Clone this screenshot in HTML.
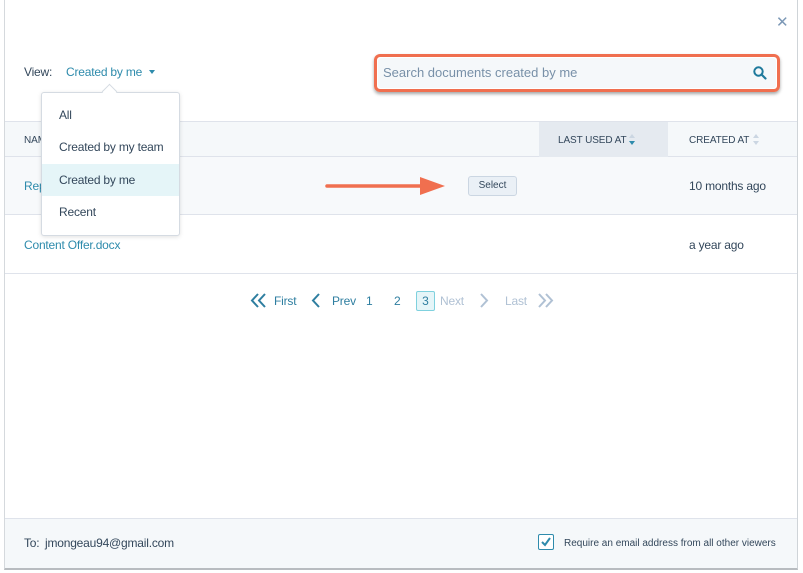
<!DOCTYPE html>
<html><head><style>
*{box-sizing:border-box;margin:0;padding:0}
body{width:803px;height:573px;background:#fff;font-family:"Liberation Sans",sans-serif;position:relative;overflow:hidden;color:#33475b}
.modal{position:absolute;left:4px;top:0;width:794px;height:570px;border-left:1px solid #d5d9dd;border-right:1px solid #cfd4d8;border-bottom:2px solid #b8bcc0;background:#fff}
.abs{position:absolute}
.t{font-size:12px;letter-spacing:-0.2px}
.h{font-size:10px;letter-spacing:-0.1px;color:#33475b}
</style></head><body>
<div class="modal"></div>
<div class="abs" style="left:776px;top:13px;font-size:15px;color:#7c98b6">✕</div>
<div class="abs t" style="left:24px;top:65px;color:#33475b">View:</div>
<div class="abs t" style="left:66px;top:65px;color:#2e8bac">Created by me</div>
<div class="abs" style="left:149px;top:70px;width:0;height:0;border-left:3px solid transparent;border-right:3px solid transparent;border-top:4px solid #2e8bac"></div>
<!-- search -->
<div class="abs" style="left:374px;top:54px;width:406px;height:38px;border:3px solid #f06f4f;border-radius:6px;box-shadow:0 2px 3px rgba(0,0,0,.35)"></div>
<div class="abs" style="left:378px;top:58px;width:398px;height:30px;background:#f5f8fa;border-radius:3px"></div>
<div class="abs" style="left:383px;top:65px;font-size:13px;color:#7890a8">Search documents created by me</div>
<svg class="abs" style="left:753px;top:66px" width="14" height="14" viewBox="0 0 14 14"><circle cx="5.5" cy="5.5" r="4.2" fill="none" stroke="#1f7a9c" stroke-width="2"/><path d="M8.5 8.5L12.5 12.5" stroke="#1f7a9c" stroke-width="2.2" stroke-linecap="round"/></svg>
<!-- table -->
<div class="abs" style="left:5px;top:121px;width:792px;height:36px;background:#f5f8fa;border-top:1px solid #dfe3eb;border-bottom:1px solid #dfe3eb"></div>
<div class="abs" style="left:539px;top:122px;width:129px;height:35px;background:#e5eaf0"></div>
<div class="abs h" style="left:24px;top:135px">NAME</div>
<div class="abs h" style="left:558px;top:135px">LAST USED AT</div>
<div class="abs" style="left:629px;top:134px;width:0;height:0;border-left:3px solid transparent;border-right:3px solid transparent;border-bottom:4px solid #cbd6e2"></div>
<div class="abs" style="left:629px;top:141px;width:0;height:0;border-left:3px solid transparent;border-right:3px solid transparent;border-top:4px solid #2e8bac"></div>
<div class="abs h" style="left:689px;top:135px">CREATED AT</div>
<div class="abs" style="left:753px;top:134px;width:0;height:0;border-left:3px solid transparent;border-right:3px solid transparent;border-bottom:4px solid #cbd6e2"></div>
<div class="abs" style="left:753px;top:141px;width:0;height:0;border-left:3px solid transparent;border-right:3px solid transparent;border-top:4px solid #cbd6e2"></div>
<div class="abs" style="left:5px;top:157px;width:792px;height:58px;background:#f7f9fb;border-bottom:1px solid #dfe3eb"></div>
<div class="abs t" style="left:24px;top:179px;color:#2e8bac">Report</div>
<div class="abs" style="left:468px;top:176px;width:49px;height:20px;background:#eaf0f6;border:1px solid #cbd6e2;border-radius:3px;font-size:10px;color:#33475b;text-align:center;line-height:18px">Select</div>
<div class="abs t" style="left:689px;top:179px">10 months ago</div>
<div class="abs" style="left:5px;top:215px;width:792px;height:59px;border-bottom:1px solid #dfe3eb"></div>
<div class="abs t" style="left:24px;top:238px;color:#2e8bac">Content Offer.docx</div>
<div class="abs t" style="left:689px;top:238px">a year ago</div>
<!-- arrow -->
<svg class="abs" style="left:322px;top:174px" width="126" height="24"><path d="M5 12H100" stroke="#f06f4f" stroke-width="3.5" stroke-linecap="round"/><path d="M98 3L123 12L98 21Z" fill="#f06f4f"/></svg>
<!-- dropdown -->
<div class="abs" style="left:41px;top:92px;width:139px;height:144px;background:#fff;border:1px solid #d5dbe2;border-radius:3px;box-shadow:0 1px 4px rgba(0,0,0,.12)"></div>
<div class="abs" style="left:104px;top:86px;width:11px;height:11px;background:#fff;border-left:1px solid #d5dbe2;border-top:1px solid #d5dbe2;transform:rotate(45deg)"></div>
<div class="abs" style="left:42px;top:164px;width:137px;height:32px;background:#e5f5f8"></div>
<div class="abs t" style="left:59px;top:108px">All</div>
<div class="abs t" style="left:59px;top:140px">Created by my team</div>
<div class="abs t" style="left:59px;top:173px">Created by me</div>
<div class="abs t" style="left:59px;top:205px">Recent</div>
<!-- pagination -->
<svg class="abs" style="left:249px;top:292px" width="20" height="17"><path d="M9 2L3 8.5L9 15M16 2L10 8.5L16 15" stroke="#2e7ea0" stroke-width="2" fill="none"/></svg>
<div class="abs t" style="left:274px;top:294px;color:#2e7ea0">First</div>
<svg class="abs" style="left:310px;top:292px" width="12" height="17"><path d="M9 2L3 8.5L9 15" stroke="#2e7ea0" stroke-width="2" fill="none"/></svg>
<div class="abs t" style="left:332px;top:294px;color:#2e7ea0">Prev</div>
<div class="abs t" style="left:366px;top:294px;color:#2e7ea0">1</div>
<div class="abs t" style="left:394px;top:294px;color:#2e7ea0">2</div>
<div class="abs" style="left:416px;top:291px;width:19px;height:20px;border:1px solid #7fd1de;background:#e5f5f8;border-radius:2px;font-size:12px;color:#2e7ea0;text-align:center;line-height:18px">3</div>
<div class="abs t" style="left:440px;top:294px;color:#b0c1d4">Next</div>
<svg class="abs" style="left:478px;top:292px" width="12" height="17"><path d="M3 2L9 8.5L3 15" stroke="#b0c1d4" stroke-width="2" fill="none"/></svg>
<div class="abs t" style="left:505px;top:294px;color:#b0c1d4">Last</div>
<svg class="abs" style="left:536px;top:292px" width="20" height="17"><path d="M3 2L9 8.5L3 15M10 2L16 8.5L10 15" stroke="#b0c1d4" stroke-width="2" fill="none"/></svg>
<!-- footer -->
<div class="abs" style="left:5px;top:518px;width:792px;height:50px;background:#f5f8fa;border-top:1px solid #dfe3eb"></div>
<div class="abs t" style="left:24px;top:536px;color:#33475b">To:</div>
<div class="abs t" style="left:45px;top:536px;color:#33475b">jmongeau94@gmail.com</div>
<div class="abs" style="left:538px;top:534px;width:16px;height:16px;border:1px solid #2e8bac;background:#fff;border-radius:2px"></div>
<svg class="abs" style="left:540px;top:536px" width="12" height="12"><path d="M2 6L5 9L10 2" stroke="#2e8bac" stroke-width="2" fill="none"/></svg>
<div class="abs" style="left:564px;top:538px;font-size:10px;color:#33475b">Require an email address from all other viewers</div>
</body></html>
